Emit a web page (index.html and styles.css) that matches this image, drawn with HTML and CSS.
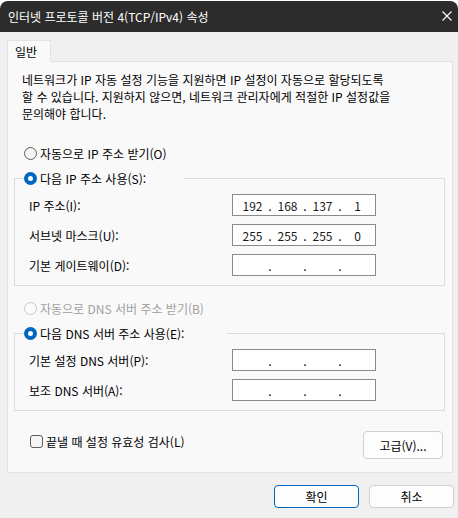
FILE: index.html
```html
<!DOCTYPE html>
<html lang="ko">
<head>
  <meta charset="UTF-8">
  <title>인터넷 프로토콜 버전 4(TCP/IPv4) 속성</title>
  <link rel="stylesheet" href="styles.css">
</head>
<body>
  <div class="window">
    <div class="titlebar">
      <span class="title">인터넷 프로토콜 버전 4(TCP/IPv4) 속성</span>
      <svg class="close" width="10" height="10" viewBox="0 0 10 10">
        <path d="M0.5 0.5 L9.5 9.5 M9.5 0.5 L0.5 9.5" stroke="#ffffff" stroke-width="1.1" fill="none"/>
      </svg>
    </div>

    <div class="content">
      <div class="tabs">
        <div class="tab">일반</div>
      </div>

      <div class="panel">
        <p class="intro">
          네트워크가 IP 자동 설정 기능을 지원하면 IP 설정이 자동으로 할당되도록<br>
          할 수 있습니다. 지원하지 않으면, 네트워크 관리자에게 적절한 IP 설정값을<br>
          문의해야 합니다.
        </p>

        <div class="option-row">
          <span class="radio"></span>자동으로 IP 주소 받기(O)
        </div>

        <fieldset class="group">
          <legend class="legend-ip"><span class="radio checked"></span>다음 IP 주소 사용(S):</legend>
          <div class="field-row">
            <span class="label">IP 주소(I):</span>
            <div class="ip-box">
              <span class="seg">192</span><span class="dot">.</span><span class="seg">168</span><span class="dot">.</span><span class="seg">137</span><span class="dot">.</span><span class="seg">1</span>
            </div>
          </div>
          <div class="field-row">
            <span class="label">서브넷 마스크(U):</span>
            <div class="ip-box">
              <span class="seg">255</span><span class="dot">.</span><span class="seg">255</span><span class="dot">.</span><span class="seg">255</span><span class="dot">.</span><span class="seg">0</span>
            </div>
          </div>
          <div class="field-row">
            <span class="label">기본 게이트웨이(D):</span>
            <div class="ip-box">
              <span class="seg"></span><span class="dot">.</span><span class="seg"></span><span class="dot">.</span><span class="seg"></span><span class="dot">.</span><span class="seg"></span>
            </div>
          </div>
        </fieldset>

        <div class="option-row disabled dns-auto">
          <span class="radio"></span>자동으로 DNS 서버 주소 받기(B)
        </div>

        <fieldset class="group">
          <legend class="legend-dns"><span class="radio checked"></span>다음 DNS 서버 주소 사용(E):</legend>
          <div class="field-row">
            <span class="label">기본 설정 DNS 서버(P):</span>
            <div class="ip-box">
              <span class="seg"></span><span class="dot">.</span><span class="seg"></span><span class="dot">.</span><span class="seg"></span><span class="dot">.</span><span class="seg"></span>
            </div>
          </div>
          <div class="field-row">
            <span class="label">보조 DNS 서버(A):</span>
            <div class="ip-box">
              <span class="seg"></span><span class="dot">.</span><span class="seg"></span><span class="dot">.</span><span class="seg"></span><span class="dot">.</span><span class="seg"></span>
            </div>
          </div>
        </fieldset>

        <div class="bottom-row">
          <div class="check-row">
            <span class="checkbox"></span>끝낼 때 설정 유효성 검사(L)
          </div>
          <button class="btn advanced">고급(V)...</button>
        </div>
      </div>

      <div class="dialog-buttons">
        <button class="btn primary">확인</button>
        <button class="btn">취소</button>
      </div>
    </div>
  </div>
</body>
</html>
```

FILE: styles.css
```css
html, body {
  margin: 0;
  padding: 0;
  background-color: #ffffff;
}

body {
  font-family: "Noto Sans CJK KR", "Noto Sans", sans-serif;
  font-size: 12px;
  color: #000000;
}

.window {
  width: 458px;
  height: 517px;
  margin-top: 1px;
  background-color: #f0f0f0;
  border-radius: 8px 8px 0 0;
  overflow: hidden;
}

.titlebar {
  height: 31px;
  background-color: #2c2c2c;
  display: flex;
  align-items: center;
  justify-content: space-between;
  padding: 0 6px 0 8px;
}

.title {
  color: #ffffff;
  font-size: 12px;
  line-height: 17px;
  margin-top: -1px;
}

.close {
  margin-top: -1px;
}

.content {
  padding-top: 8px;
}

.tabs {
  display: flex;
  padding-left: 7px;
}

.tab {
  position: relative;
  z-index: 1;
  width: 35px;
  height: 21px;
  line-height: 21px;
  padding-left: 7px;
  background-color: #f9f9f9;
  border: 1px solid #e3e3e3;
  border-bottom: none;
  margin-bottom: -1px;
}

.panel {
  margin: 0 5px 0 7px;
  background-color: #f9f9f9;
  border: 1px solid #e3e3e3;
  padding: 9px 0 13px 0;
}

.intro {
  margin: 0 0 0 14px;
  line-height: 17px;
  white-space: nowrap;
}

.option-row {
  display: flex;
  align-items: center;
  height: 17px;
  line-height: 17px;
  margin: 23px 0 0 16px;
}

.option-row.disabled {
  color: #a0a0a0;
}

.dns-auto {
  margin-top: 14px;
}

.radio {
  display: inline-block;
  box-sizing: border-box;
  width: 13px;
  height: 13px;
  border: 1px solid #5d5d5d;
  border-radius: 50%;
  background-color: #f5f5f5;
  margin-right: 3px;
}

.disabled .radio {
  border-color: #c8c8c8;
  background-color: #fbfbfb;
}

.radio.checked {
  border: 4px solid #0067c0;
  background-color: #ffffff;
}

.group {
  margin: 8px 7px 0 6px;
  padding: 0 0 9px 0;
  border: 1px solid #dcdcdc;
}

.group legend {
  display: flex;
  align-items: center;
  height: 17px;
  line-height: 17px;
  padding: 0;
  margin-left: 9px;
}

.legend-ip {
  width: 160px;
}

.legend-dns {
  width: 203px;
}

.field-row {
  display: flex;
  align-items: center;
  height: 22px;
  padding-left: 14px;
  margin-top: 8px;
}

.field-row:first-of-type {
  margin-top: 7px;
}

.label {
  width: 203px;
}

.ip-box {
  box-sizing: border-box;
  width: 144px;
  height: 22px;
  border: 1px solid #8a8a8a;
  background-color: #ffffff;
  display: flex;
  align-items: center;
  padding-left: 6px;
}

.seg {
  width: 27px;
  text-align: center;
  color: #1a1a1a;
}

.dot {
  width: 8px;
  text-align: center;
}

.bottom-row {
  display: flex;
  justify-content: space-between;
  align-items: flex-start;
  margin-top: 20px;
  padding: 0 9px 0 22px;
}

.check-row {
  display: flex;
  align-items: center;
  height: 17px;
  line-height: 17px;
  margin-top: 2px;
}

.checkbox {
  display: inline-block;
  box-sizing: border-box;
  width: 13px;
  height: 13px;
  border: 1px solid #5d5d5d;
  border-radius: 3px;
  background-color: #f5f5f5;
  margin-right: 3px;
}

.btn {
  font-family: inherit;
  font-size: 12px;
  color: #000000;
  background-color: #fdfdfd;
  border: 1px solid #d0d0d0;
  border-radius: 4px;
  padding: 0;
  cursor: pointer;
}

.advanced {
  width: 80px;
  height: 28px;
}

.dialog-buttons {
  display: flex;
  justify-content: flex-end;
  gap: 10px;
  margin-top: 12px;
  padding-right: 4px;
}

.dialog-buttons .btn {
  width: 85px;
  height: 23px;
}

.btn.primary {
  border-color: #0067c0;
}
```
